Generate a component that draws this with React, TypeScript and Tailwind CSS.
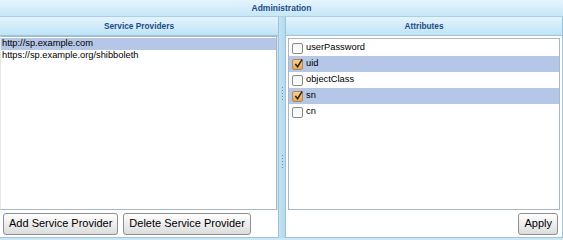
import { useState } from 'react'

const providers = ['http://sp.example.com', 'https://sp.example.org/shibboleth']

const initialAttrs = [
  { name: 'userPassword', checked: false },
  { name: 'uid', checked: true },
  { name: 'objectClass', checked: false },
  { name: 'sn', checked: true },
  { name: 'cn', checked: false },
]

function PanelHeader({ title }: { title: string }) {
  return (
    <div className="h-[19px] flex items-center justify-center border-b border-[#9cc5dc] bg-gradient-to-b from-[#e4f4fd] to-[#bfe3f6] text-[8.3px] font-bold text-[#1d4c86]">
      {title}
    </div>
  )
}

function Check({ checked }: { checked: boolean }) {
  if (!checked) {
    return <span className="w-[11px] h-[11px] rounded-[2px] border border-[#8a8a8a] bg-gradient-to-b from-[#f4f4f4] to-white shrink-0" />
  }
  return (
    <span className="w-[11px] h-[11px] rounded-[2px] border border-[#b08a52] bg-gradient-to-b from-[#f7cf8e] to-[#e9a855] shrink-0 relative">
      <svg viewBox="0 0 12 12" className="absolute -top-[2px] left-0 w-[11px] h-[11px]">
        <path d="M2.5 6.5 L5 9.5 L10 1.5" fill="none" stroke="#222" strokeWidth="1.6" />
      </svg>
    </span>
  )
}

function Btn({ label }: { label: string }) {
  return (
    <button className="h-[22px] px-[5px] rounded-[3px] border border-[#8f8f8f] bg-gradient-to-b from-white to-[#dcdcdc] text-[11px] text-black leading-none shadow-[inset_0_1px_0_#fff]">
      {label}
    </button>
  )
}

export default function App() {
  const [selected, setSelected] = useState(0)
  const [attrs, setAttrs] = useState(initialAttrs)

  return (
    <div className="w-[563px] h-[240px] bg-[#cde6f3] flex flex-col font-['Liberation_Sans',Arial,sans-serif] overflow-hidden">
      <div className="h-[17px] flex items-center justify-center border-b border-[#a9d0e4] bg-gradient-to-b from-[#e6f5fd] to-[#c6e6f7] text-[8.5px] font-bold text-[#1d4c86]">
        Administration
      </div>

      <div className="flex-1 flex min-h-0 pb-[2px]">
        {/* left */}
        <div className="w-[279px] flex flex-col border-r border-[#9cc5dc] bg-white">
          <PanelHeader title="Service Providers" />
          <div className="flex-1 flex flex-col bg-[#cde6f3] border-b border-[#9cc5dc]">
            <div className="flex-1 bg-white border border-[#a9b8c2] border-l-[#e8e8e8] py-[1px] mr-[1px]">
              {providers.map((p, i) => (
                <div
                  key={p}
                  onClick={() => setSelected(i)}
                  className={`h-[12px] flex items-center pl-[1px] text-[9.3px] text-black leading-none ${i === selected ? 'bg-[#b6c6e6]' : ''}`}
                >
                  {p}
                </div>
              ))}
            </div>
            <div className="h-[27px] bg-white flex items-center gap-[5px] px-[3px]">
              <Btn label="Add Service Provider" />
              <Btn label="Delete Service Provider" />
            </div>
          </div>
        </div>

        {/* splitter */}
        <div className="w-[7px] bg-gradient-to-r from-[#c4e3f3] to-[#b4d9ee] flex flex-col items-center justify-center gap-[55px] border-r border-[#9cc5dc]">
          <div className="flex flex-col gap-[2px]">
            {[0, 1, 2, 3, 4].map(d => <span key={d} className="w-[1px] h-[1px] bg-[#6b8fa6]" />)}
          </div>
          <div className="flex flex-col gap-[2px]">
            {[0, 1, 2, 3, 4].map(d => <span key={d} className="w-[1px] h-[1px] bg-[#6b8fa6]" />)}
          </div>
        </div>

        {/* right */}
        <div className="flex-1 flex flex-col bg-white border-r border-[#9cc5dc]">
          <PanelHeader title="Attributes" />
          <div className="flex-1 flex flex-col border-b border-[#9cc5dc]">
            <div className="flex-1 mx-[2px] mt-[2px] border border-[#a9b8c2] bg-white pt-[1px]">
              {attrs.map((a, i) => (
                <div
                  key={a.name}
                  onClick={() => setAttrs(attrs.map((x, j) => (j === i ? { ...x, checked: !x.checked } : x)))}
                  className={`h-[16px] flex items-center gap-[3px] pl-[3px] text-[9.3px] text-black ${a.checked ? 'bg-[#b6c6e6]' : ''}`}
                >
                  <Check checked={a.checked} />
                  <span>{a.name}</span>
                </div>
              ))}
            </div>
            <div className="h-[27px] flex items-center justify-end pr-[4px]">
              <Btn label="Apply" />
            </div>
          </div>
        </div>
      </div>
    </div>
  )
}
